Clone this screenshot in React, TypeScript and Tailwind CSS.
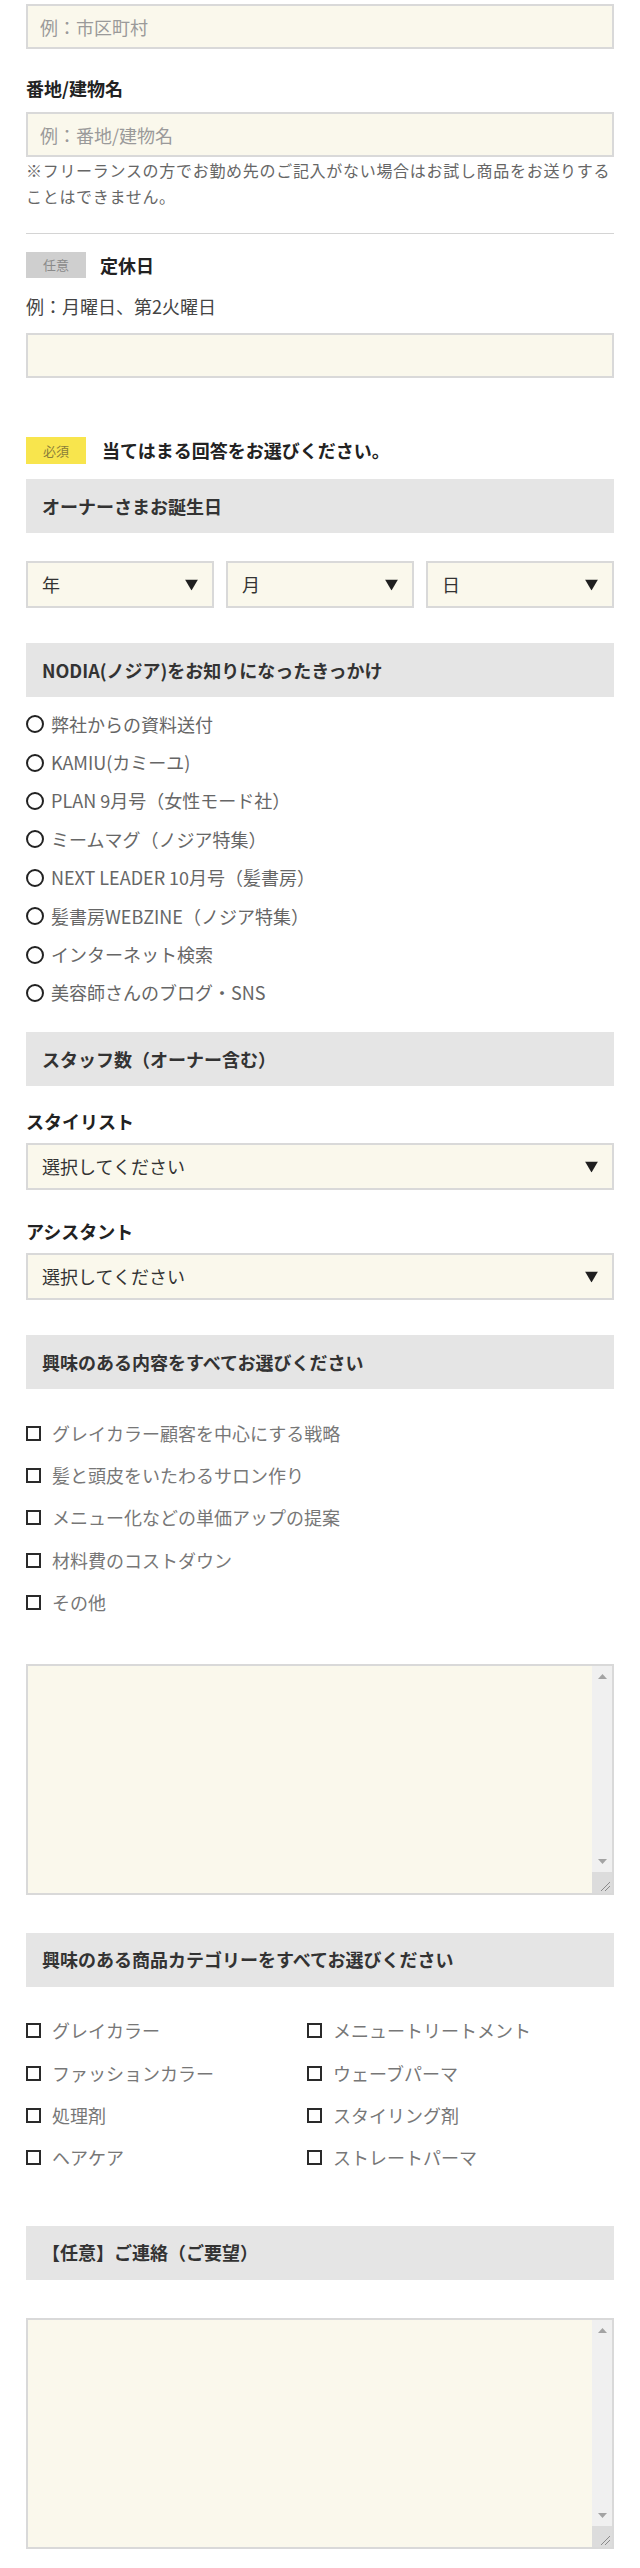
import React from "react";

const radios = [
  "弊社からの資料送付",
  "KAMIU(カミーユ)",
  "PLAN 9月号（女性モード社）",
  "ミームマグ（ノジア特集）",
  "NEXT LEADER 10月号（髪書房）",
  "髪書房WEBZINE（ノジア特集）",
  "インターネット検索",
  "美容師さんのブログ・SNS",
];

const interests = [
  "グレイカラー顧客を中心にする戦略",
  "髪と頭皮をいたわるサロン作り",
  "メニュー化などの単価アップの提案",
  "材料費のコストダウン",
  "その他",
];

const categories = [
  "グレイカラー",
  "メニュートリートメント",
  "ファッションカラー",
  "ウェーブパーマ",
  "処理剤",
  "スタイリング剤",
  "ヘアケア",
  "ストレートパーマ",
];

const Arrow = () => (
  <svg
    width="13"
    height="11"
    viewBox="0 0 13 11"
    className="pointer-events-none absolute right-[16px] top-1/2 -translate-y-1/2"
  >
    <polygon points="0,0 13,0 6.5,11" fill="#1f1f1f" />
  </svg>
);

const SelectBox = ({ label }: { label: string }) => (
  <div className="relative h-[47px]">
    <select className="h-full w-full appearance-none border-2 border-[#d9d9d9] bg-[#faf8ec] pl-[14px] text-[18px] text-[#333] outline-none">
      <option>{label}</option>
    </select>
    <Arrow />
  </div>
);

const Header = ({ title }: { title: string }) => (
  <div className="flex h-[54px] items-center bg-[#e5e5e5] pl-[16px] text-[18px] font-bold text-[#333]">
    {title}
  </div>
);

const TextInput = ({ placeholder }: { placeholder?: string }) => (
  <input
    type="text"
    placeholder={placeholder}
    className="block h-[45px] w-full border-2 border-[#d9d9d9] bg-[#faf8ec] px-[12px] text-[18px] text-[#333] outline-none placeholder:text-[#9a9a9a]"
  />
);

const CheckRow = ({ text }: { text: string }) => (
  <label className="flex h-[42.3px] items-center">
    <span className="h-[15px] w-[15px] shrink-0 border-2 border-[#2a2a2a] bg-white" />
    <span className="ml-[11px] text-[18px] text-[#777]">{text}</span>
  </label>
);

// textarea with the classic scrollbar + resize grip seen in the screenshot
const TextArea = () => (
  <div className="flex h-[231px] border-2 border-[#d9d9d9] bg-[#faf8ec]">
    <textarea className="h-full flex-1 resize-none bg-transparent p-[8px] text-[18px] outline-none" />
    <div className="flex w-[20px] flex-col bg-[#f0f0f0]">
      <div className="flex h-[22px] items-center justify-center">
        <svg width="9" height="5" viewBox="0 0 9 5">
          <polygon points="0,5 9,5 4.5,0" fill="#a3a3a3" />
        </svg>
      </div>
      <div className="flex-1" />
      <div className="flex h-[20px] items-center justify-center">
        <svg width="9" height="5" viewBox="0 0 9 5">
          <polygon points="0,0 9,0 4.5,5" fill="#a3a3a3" />
        </svg>
      </div>
      <div className="flex h-[21px] items-end justify-end bg-[#dcdcdc] p-[2px]">
        <svg width="11" height="11" viewBox="0 0 11 11">
          <line x1="2" y1="11" x2="11" y2="2" stroke="#8a8a8a" strokeWidth="1" />
          <line x1="6" y1="11" x2="11" y2="6" stroke="#8a8a8a" strokeWidth="1" />
        </svg>
      </div>
    </div>
  </div>
);

export default function App() {
  return (
    <div className="min-h-[2568px] bg-white px-[26px] pb-[19px] pt-[4px] font-['Noto_Sans_CJK_JP','Liberation_Sans',sans-serif] text-[#333]">
      <TextInput placeholder="例：市区町村" />

      <div className="mt-[26px] text-[18px] font-bold leading-[26px] text-[#222]">
        番地/建物名
      </div>
      <div className="mt-[11px]">
        <TextInput placeholder="例：番地/建物名" />
      </div>
      <p className="text-[16px] leading-[26px] tracking-[0.7px] text-[#666]">
        ※フリーランスの方でお勤め先のご記入がない場合はお試し商品をお送りする
        <br />
        ことはできません。
      </p>

      <div className="mt-[24px] h-px bg-[#d4d4d4]" />

      <div className="mt-[18px] flex h-[26px] items-center leading-[26px]">
        <span className="flex h-[26px] w-[60px] items-center justify-center bg-[#cfcfcf] text-[13px] text-[#8a8a8a]">
          任意
        </span>
        <span className="ml-[14px] text-[18px] font-bold text-[#222]">定休日</span>
      </div>
      <div className="mt-[15px] text-[18px] leading-[26px] text-[#444]">
        例：月曜日、第2火曜日
      </div>
      <div className="mt-[14px]">
        <TextInput />
      </div>

      <div className="mt-[59px] flex h-[27px] items-center leading-[27px]">
        <span className="flex h-[27px] w-[60px] items-center justify-center bg-[#f8e54d] text-[13px] text-[#8a7d3a]">
          必須
        </span>
        <span className="ml-[16px] text-[18px] font-bold text-[#222]">
          当てはまる回答をお選びください。
        </span>
      </div>

      <div className="mt-[15px]">
        <Header title="オーナーさまお誕生日" />
      </div>
      <div className="mt-[28px] grid grid-cols-3 gap-[12px]">
        <SelectBox label="年" />
        <SelectBox label="月" />
        <SelectBox label="日" />
      </div>

      <div className="mt-[35px]">
        <Header title="NODIA(ノジア)をお知りになったきっかけ" />
      </div>
      <div className="mt-[8px]">
        {radios.map((r) => (
          <label key={r} className="flex h-[38.4px] items-center">
            <span className="h-[18px] w-[18px] shrink-0 rounded-full border-2 border-[#222] bg-white" />
            <span className="ml-[7px] text-[18px] text-[#666]">{r}</span>
          </label>
        ))}
      </div>

      <div className="mt-[20px]">
        <Header title="スタッフ数（オーナー含む）" />
      </div>
      <div className="mt-[22px] text-[18px] font-bold leading-[26px] text-[#222]">
        スタイリスト
      </div>
      <div className="mt-[9px]">
        <SelectBox label="選択してください" />
      </div>
      <div className="mt-[28px] text-[18px] font-bold leading-[26px] text-[#222]">
        アシスタント
      </div>
      <div className="mt-[9px]">
        <SelectBox label="選択してください" />
      </div>

      <div className="mt-[35px]">
        <Header title="興味のある内容をすべてお選びください" />
      </div>
      <div className="mt-[23px]">
        {interests.map((t) => (
          <CheckRow key={t} text={t} />
        ))}
      </div>
      <div className="mt-[40px]">
        <TextArea />
      </div>

      <div className="mt-[38px]">
        <Header title="興味のある商品カテゴリーをすべてお選びください" />
      </div>
      <div className="mt-[23px] grid grid-cols-[281px_1fr]">
        {categories.map((t) => (
          <CheckRow key={t} text={t} />
        ))}
      </div>

      <div className="mt-[47px]">
        <Header title="【任意】ご連絡（ご要望）" />
      </div>
      <div className="mt-[38px]">
        <TextArea />
      </div>
    </div>
  );
}
